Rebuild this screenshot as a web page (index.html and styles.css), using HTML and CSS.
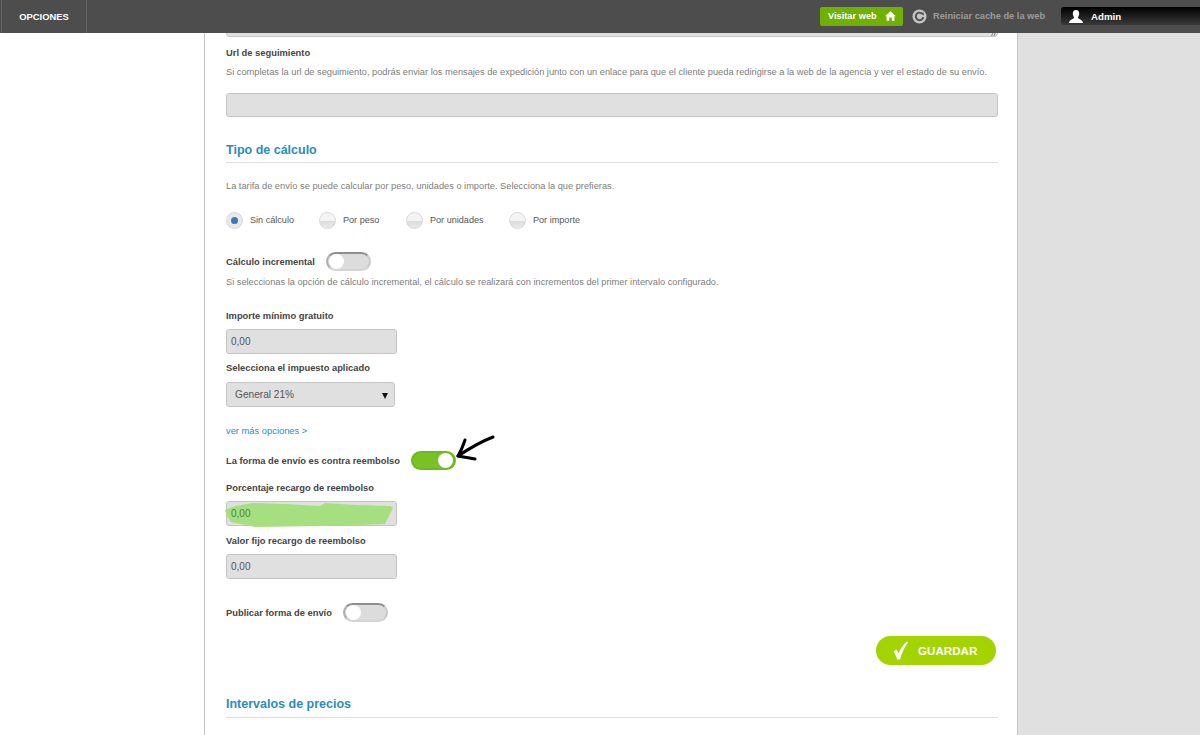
FILE: index.html
```html
<!DOCTYPE html>
<html lang="es">
<head>
<meta charset="utf-8">
<title>Opciones</title>
<link rel="stylesheet" href="styles.css">
</head>
<body>
<header class="topbar">
  <div class="menu-tab">OPCIONES</div>
  <div class="top-actions">
    <a class="visit-btn">Visitar web
      <svg class="home-icon" viewBox="0 0 14 12"><path d="M7 0 L14 6.2 H12 V12 H8.6 V8 H5.4 V12 H2 V6.2 H0 Z" fill="#fff"/></svg>
    </a>
    <a class="cache-link">
      <svg class="cache-icon" viewBox="0 0 16 16"><circle cx="8" cy="8" r="7.5" fill="#c4c4c4"/><path d="M11 5.2 A4 4 0 1 0 12 8.6" fill="none" stroke="#4d4d4d" stroke-width="2"/><path d="M9 4.4 L12.6 3.6 L12.4 7 Z" fill="#4d4d4d"/></svg>
      Reiniciar cache de la web
    </a>
    <div class="user-box">
      <svg class="user-icon" viewBox="0 0 14 13"><path d="M7 0 C9.2 0 10.2 1.6 10.2 3.6 C10.2 5.4 9.4 6.8 8.8 7.4 C8.8 8.8 14 9.6 14 13 H0 C0 9.6 5.2 8.8 5.2 7.4 C4.6 6.8 3.8 5.4 3.8 3.6 C3.8 1.6 4.8 0 7 0 Z" fill="#fff"/></svg>
      <span>Admin</span>
    </div>
  </div>
</header>
<div class="layout">
  <aside class="left-col"></aside>
  <main class="panel">
    <div class="stub-textarea"><svg class="grip" viewBox="0 0 6 4"><path d="M1 4 L3 0 M4 4 L6 0" stroke="#666" stroke-width="1" fill="none"/></svg></div>
    <h4 class="label first-label">Url de seguimiento</h4>
    <p class="help">Si completas la url de seguimiento, podrás enviar los mensajes de expedición junto con un enlace para que el cliente pueda redirigirse a la web de la agencia y ver el estado de su envío.</p>
    <div class="field wide"></div>

    <h2 class="section-title calc-title">Tipo de cálculo</h2>
    <p class="help calc-help">La tarifa de envío se puede calcular por peso, unidades o importe. Selecciona la que prefieras.</p>
    <div class="radios">
      <label class="radio-item"><span class="radio on"></span>Sin cálculo</label>
      <label class="radio-item"><span class="radio"></span>Por peso</label>
      <label class="radio-item"><span class="radio"></span>Por unidades</label>
      <label class="radio-item"><span class="radio"></span>Por importe</label>
    </div>

    <div class="switch-row incr-row">
      <span class="label">Cálculo incremental</span>
      <span class="switch"></span>
    </div>
    <p class="help incr-help">Si seleccionas la opción de cálculo incremental, el cálculo se realizará con incrementos del primer intervalo configurado.</p>

    <h4 class="label min-label">Importe mínimo gratuito</h4>
    <div class="field small">0,00</div>
    <h4 class="label tax-label">Selecciona el impuesto aplicado</h4>
    <div class="field select">General 21%<span class="caret"></span></div>
    <a class="more-link">ver más opciones &gt;</a>

    <div class="switch-row cod-row">
      <span class="label">La forma de envío es contra reembolso</span>
      <span class="switch active"></span>
      <svg class="arrow" viewBox="0 0 42 30"><path d="M2 22 C14 14 24 8 37 3" fill="none" stroke="#000" stroke-width="3" stroke-linecap="round"/><path d="M9 6 C7 12 5 17 2 22 C8 23 14 24 19 25" fill="none" stroke="#000" stroke-width="3" stroke-linecap="round" stroke-linejoin="round"/></svg>
    </div>
    <h4 class="label pct-label">Porcentaje recargo de reembolso</h4>
    <div class="field small marked">
      <svg class="scribble" viewBox="0 0 170 25" preserveAspectRatio="none"><path d="M0 8 L10 4 L28 1 L60 2 L95 4 L100 1 L130 3 L165 4 L168 6 L160 22 L100 24 L30 25 L6 20 L2 14 Z" fill="#a6df80"/></svg>
      <span class="marked-value">0,00</span>
    </div>
    <h4 class="label fix-label">Valor fijo recargo de reembolso</h4>
    <div class="field small">0,00</div>

    <div class="switch-row pub-row">
      <span class="label">Publicar forma de envío</span>
      <span class="switch"></span>
    </div>
    <div class="save-row">
      <button class="save-btn" type="button">
        <svg class="check" viewBox="0 0 16 20"><path d="M0.5 11 L3.5 9 L6 13 C8 8 11 3.5 15 0.5 L16 1.5 C12 6.5 9.5 12.5 7.5 19.5 H4.5 C3.5 16.5 2 13.5 0.5 11 Z" fill="#fff"/></svg>
        GUARDAR
      </button>
    </div>
    <h2 class="section-title last-title">Intervalos de precios</h2>
  </main>
  <aside class="right-col"></aside>
</div>
</body>
</html>
```
FILE: styles.css
```css
* { box-sizing: border-box; }
html, body { margin: 0; height: 735px; overflow: hidden; }
body { font-family: "Liberation Sans", Arial, sans-serif; font-size: 9.25px; color: #444; background: #fff; }

.topbar { height: 33px; background: #4d4d4d; display: flex; justify-content: space-between; align-items: stretch; position: relative; z-index: 2; }
.menu-tab { width: 86px; margin-left: 1px; border-left: 1px solid #666; border-right: 1px solid #666; color: #fff; font-weight: bold; font-size: 9.4px; display: flex; align-items: center; justify-content: center; }
.top-actions { display: flex; align-items: center; padding-bottom: 1px; }
.visit-btn { width: 83px; height: 19px; background: #6fb000; border-radius: 2px; color: #fff; font-weight: bold; font-size: 9.25px; display: flex; align-items: center; padding-left: 8px; gap: 8px; margin-right: 9px; }
.home-icon { width: 11px; height: 10px; flex: none; }
.cache-icon { width: 15px; height: 15px; margin-right: 6px; flex: none; }
.cache-link { color: #9c9c9c; font-weight: bold; font-size: 9.25px; display: flex; align-items: center; margin-right: 16px; width: 133px; white-space: nowrap; }
.user-box { width: 139px; height: 18px; background: linear-gradient(#000, #3a3a3a); border-radius: 3px 0 0 3px; color: #fff; font-weight: bold; font-size: 9.7px; display: flex; align-items: center; padding-left: 8px; gap: 8px; }
.user-icon { width: 14px; height: 13px; flex: none; }

.layout { display: flex; height: 702px; }
.left-col { width: 204px; background: #fff; flex: none; }
.panel { width: 814px; flex: none; background: #fff; border-left: 1px solid #c4c4c4; border-right: 1px solid #c4c4c4; padding: 0 19px 0 21px; overflow: hidden; }
.right-col { flex: 1; background: #e0e0e0; }

h2, h4, p { margin: 0; }
.label { font-size: 9.35px; font-weight: bold; color: #444; line-height: 12px; }
.help { font-size: 9.25px; color: #7d7d7d; line-height: 12px; white-space: nowrap; }
.stub-textarea { height: 4px; background: #e0e0e0; border: 1px solid #c8c8c8; border-top: 0; border-radius: 0 0 4px 4px; position: relative; overflow: hidden; }
.grip { position: absolute; right: 1px; bottom: 0; width: 6px; height: 3px; }
.first-label { margin-top: 10px; }
.first-label + .help { margin-top: 7px; }
.field { background: #e0e0e0; border: 1px solid #c4c4c4; border-radius: 3px; color: #555; font-size: 10px; display: flex; align-items: center; padding-left: 4px; }
.wide { height: 24px; margin-top: 15px; }
.small { width: 171px; height: 25px; }
.section-title { font-size: 12.5px; font-weight: bold; color: #2b8cc0; line-height: 16px; padding-top: 1px; border-bottom: 1px solid #ddd; }
.calc-title { margin-top: 24px; height: 22px; }
.calc-help { margin-top: 17px; }
.radios { display: flex; margin-top: 19px; height: 18px; align-items: center; }
.radio-item { display: flex; align-items: center; gap: 7px; font-size: 9.1px; color: #555; }
.radio-item:nth-child(1) { width: 93px; }
.radio-item:nth-child(2) { width: 87px; }
.radio-item:nth-child(3) { width: 103px; }
.radio { width: 17px; height: 17px; border-radius: 50%; background: linear-gradient(#f4f4f4 50%, #dcdcdc 55%, #eaeaea); border: 1px solid #d8d8d8; position: relative; }
.radio.on { background: #e9e9e9; }
.radio.on::after { content: ""; position: absolute; left: 4px; top: 4px; width: 7px; height: 7px; border-radius: 50%; background: #3b78c0; }
.switch-row { display: flex; align-items: center; position: relative; }
.switch { display: block; width: 45px; height: 19px; border-radius: 10px; background: #dcdcdc; border: 2px solid #9a9a9a; border-color: #8f8f8f #c8c8c8 #d4d4d4 #b0b0b0; position: relative; }
.switch::after { content: ""; position: absolute; left: 1px; top: 0; width: 15px; height: 15px; border-radius: 50%; background: #fff; }
.switch.active { background: #78c223; border-color: #6fb91f; }
.switch.active::after { left: auto; right: 1px; }
.incr-row { margin-top: 23px; gap: 11px; height: 19px; }
.incr-help { margin-top: 5px; }
.min-label { margin-top: 22px; }
.min-label + .field { margin-top: 7px; }
.tax-label { margin-top: 8px; }
.select { width: 169px; height: 25px; margin-top: 8px; padding-left: 8px; font-size: 10.15px; position: relative; }
.caret { position: absolute; right: 6px; top: 10px; border-left: 3px solid transparent; border-right: 3px solid transparent; border-top: 6px solid #111; }
.more-link { display: block; margin-top: 18px; color: #2b8cc0; font-size: 9.35px; line-height: 12px; }
.cod-row { margin-top: 14px; gap: 11px; height: 19px; }
.arrow { position: absolute; left: 230px; top: -17px; width: 42px; height: 30px; }
.pct-label { margin-top: 12px; }
.marked { margin-top: 7px; position: relative; overflow: visible; }
.scribble { position: absolute; left: -2px; top: 0; width: 170px; height: 25px; filter: blur(.5px); }
.marked-value { position: relative; color: #4f7f3a; }
.fix-label { margin-top: 9px; }
.fix-label + .field { margin-top: 7px; }
.pub-row { margin-top: 24px; gap: 11px; height: 19px; }
.save-row { display: flex; justify-content: flex-end; margin-top: 14px; padding-right: 2px; }
.save-btn { width: 120px; height: 29px; border: 0; border-radius: 15px; background: #a4d400; color: #fff; font: bold 11.6px "Liberation Sans", Arial, sans-serif; display: flex; align-items: center; padding: 0 0 0 17px; gap: 10px; }
.check { width: 15px; height: 19px; flex: none; }
.last-title { margin-top: 30px; height: 23px; }
```
